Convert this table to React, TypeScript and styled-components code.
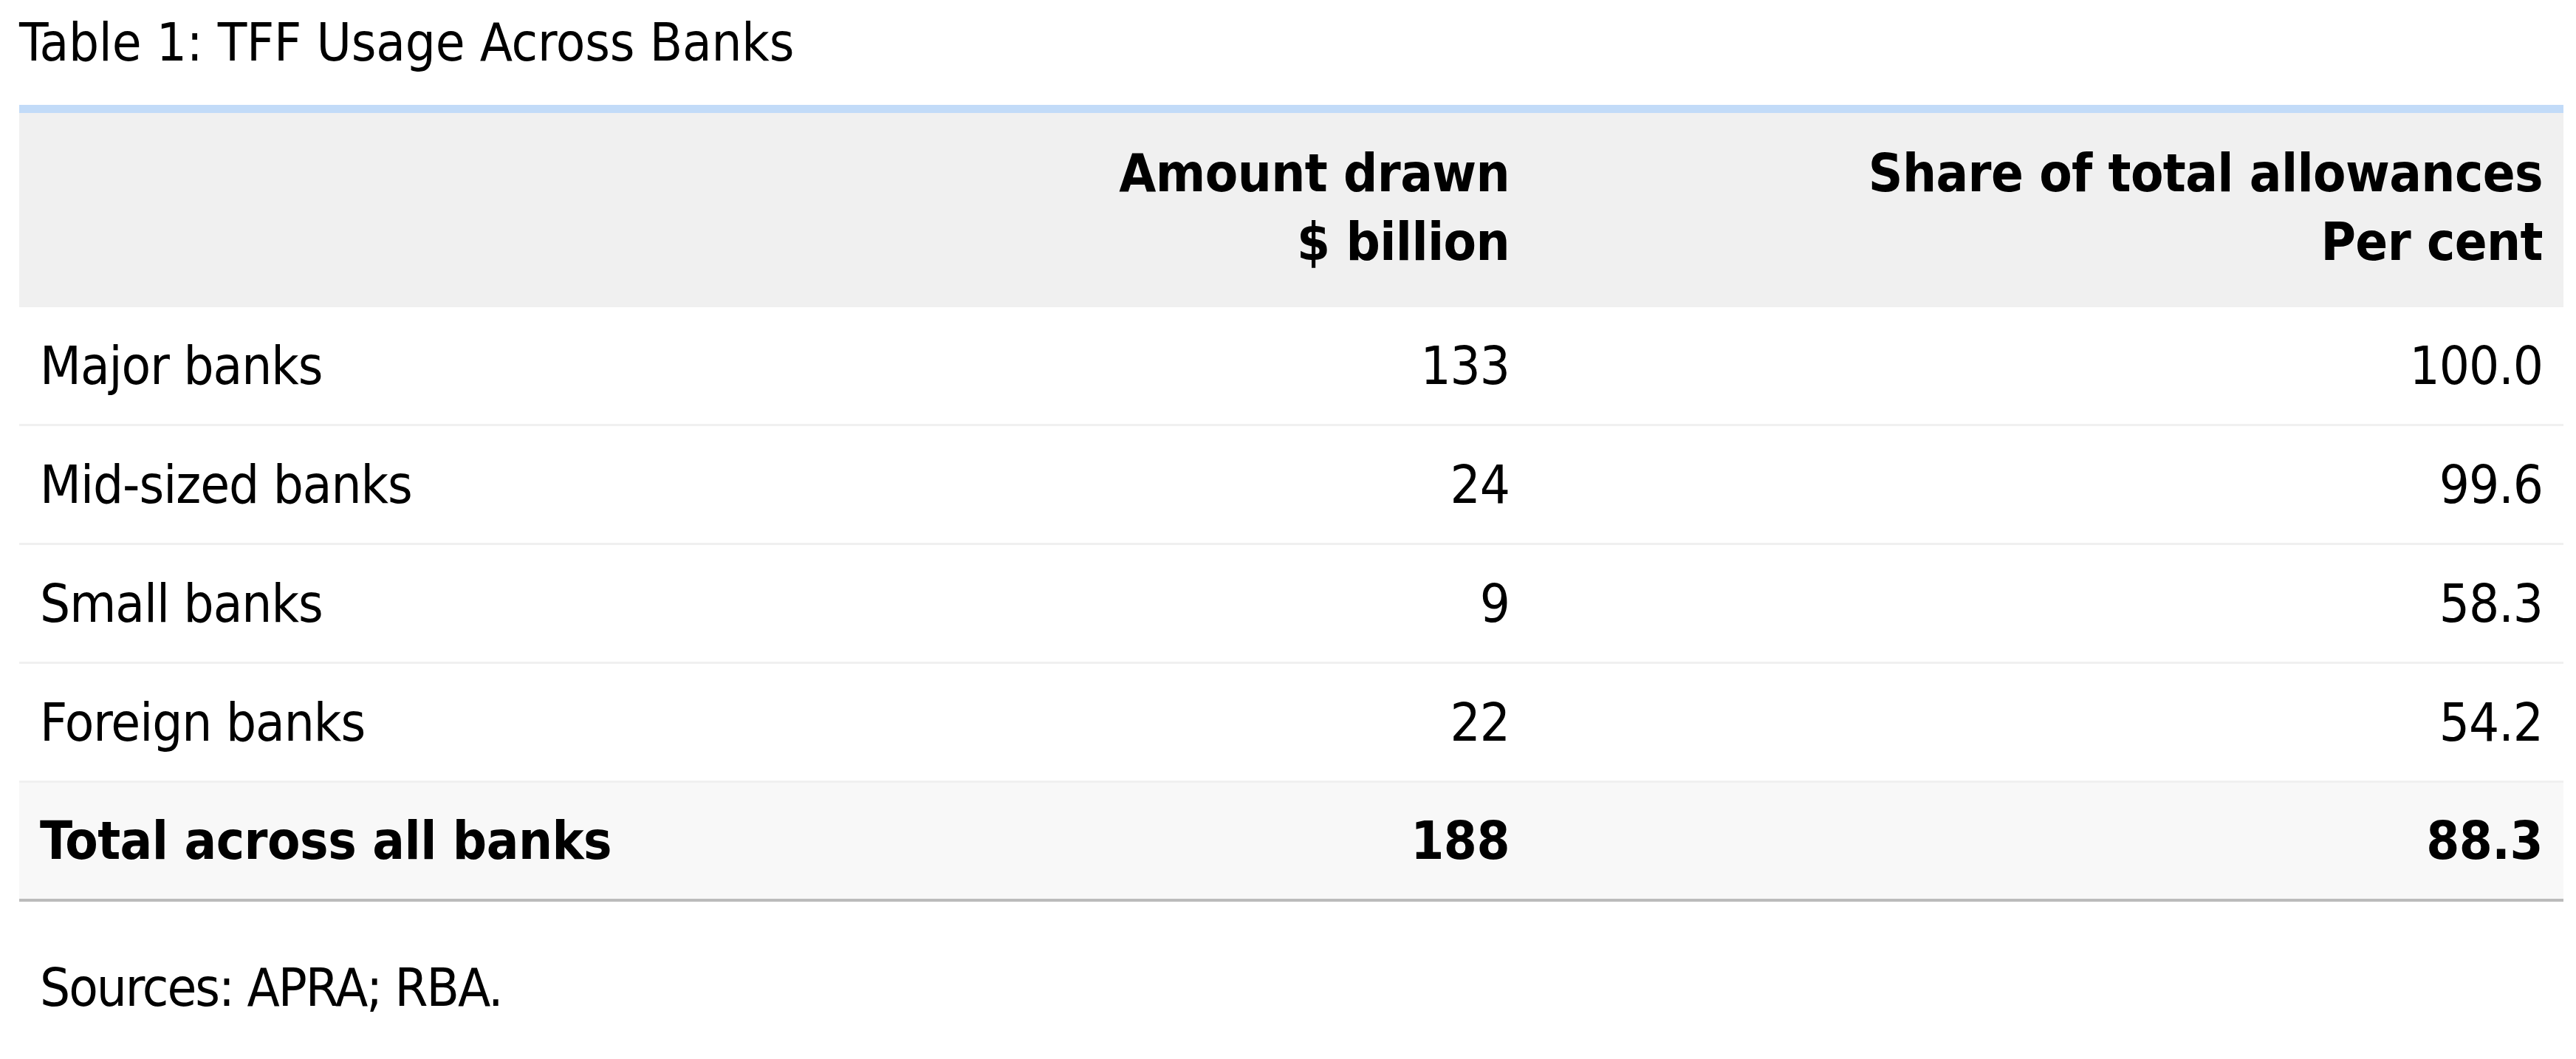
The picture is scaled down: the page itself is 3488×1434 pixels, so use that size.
import styled, { createGlobalStyle } from "styled-components";

interface BankRow {
  label: string;
  amount: string;
  share: string;
}

const rows: BankRow[] = [
  { label: "Major banks", amount: "133", share: "100.0" },
  { label: "Mid-sized banks", amount: "24", share: "99.6" },
  { label: "Small banks", amount: "9", share: "58.3" },
  { label: "Foreign banks", amount: "22", share: "54.2" },
];

const total: BankRow = {
  label: "Total across all banks",
  amount: "188",
  share: "88.3",
};

const GlobalStyle = createGlobalStyle`
  html, body {
    margin: 0;
    padding: 0;
    background: #fff;
  }
  body {
    font-family: "DejaVu Sans Condensed", "DejaVu Sans", sans-serif;
    font-stretch: condensed;
    color: #000;
  }
`;

const App = () => {
  return (
    <>
      <GlobalStyle />
      <Page>
        <Caption>Table 1: TFF Usage Across Banks</Caption>
        <Table>
          <HeadRow>
            <HeadCell />
            <HeadCell>
              Amount drawn
              <br />$ billion
            </HeadCell>
            <HeadCell>
              Share of total allowances
              <br />
              Per cent
            </HeadCell>
          </HeadRow>
          {rows.map((row) => (
            <BodyRow key={row.label}>
              <Cell>{row.label}</Cell>
              <Cell $numeric>{row.amount}</Cell>
              <Cell $numeric>{row.share}</Cell>
            </BodyRow>
          ))}
          <TotalRow>
            <Cell $bold>{total.label}</Cell>
            <Cell $numeric $bold>
              {total.amount}
            </Cell>
            <Cell $numeric $bold>
              {total.share}
            </Cell>
          </TotalRow>
        </Table>
        <Note>Sources: APRA; RBA.</Note>
      </Page>
    </>
  );
};

export default App;

const Page = styled.div`
  padding: 11px 17px 0 26px;
  font-size: 72px;
  line-height: 93px;
`;

const Caption = styled.div`
  font-weight: normal;
  letter-spacing: -0.2px;
`;

const Table = styled.div`
  margin-top: 38px;
  border-top: 11px solid #c2dbf8;
  border-bottom: 4px solid #bbbbbb;
`;

// col widths: label / amount / share
const columns = "1148fr 898fr 1399fr";

const HeadRow = styled.div`
  display: grid;
  grid-template-columns: ${columns};
  background: #f0f0f0;
  height: 263px;
  box-sizing: border-box;
  padding: 35px 0 41px;
`;

const HeadCell = styled.div`
  font-weight: bold;
  letter-spacing: -0.6px;
  text-align: right;
  padding: 0 28px;
`;

const BodyRow = styled.div`
  display: grid;
  grid-template-columns: ${columns};
  align-items: center;
  height: 161px;
  box-sizing: border-box;
  border-bottom: 3px solid #f0f0f0;
`;

const TotalRow = styled(BodyRow)`
  background: #f8f8f8;
  height: 157px;
  border-bottom: none;
`;

const Cell = styled.div<{ $numeric?: boolean; $bold?: boolean }>`
  padding: 0 28px;
  text-align: ${(p) => (p.$numeric ? "right" : "left")};
  font-weight: ${(p) => (p.$bold ? "bold" : "normal")};
  letter-spacing: ${(p) => (p.$bold ? "-0.5px" : "-1px")};
  white-space: nowrap;
`;

const Note = styled.div`
  margin-top: 70px;
  padding-left: 28px;
  letter-spacing: -2px;
`;
